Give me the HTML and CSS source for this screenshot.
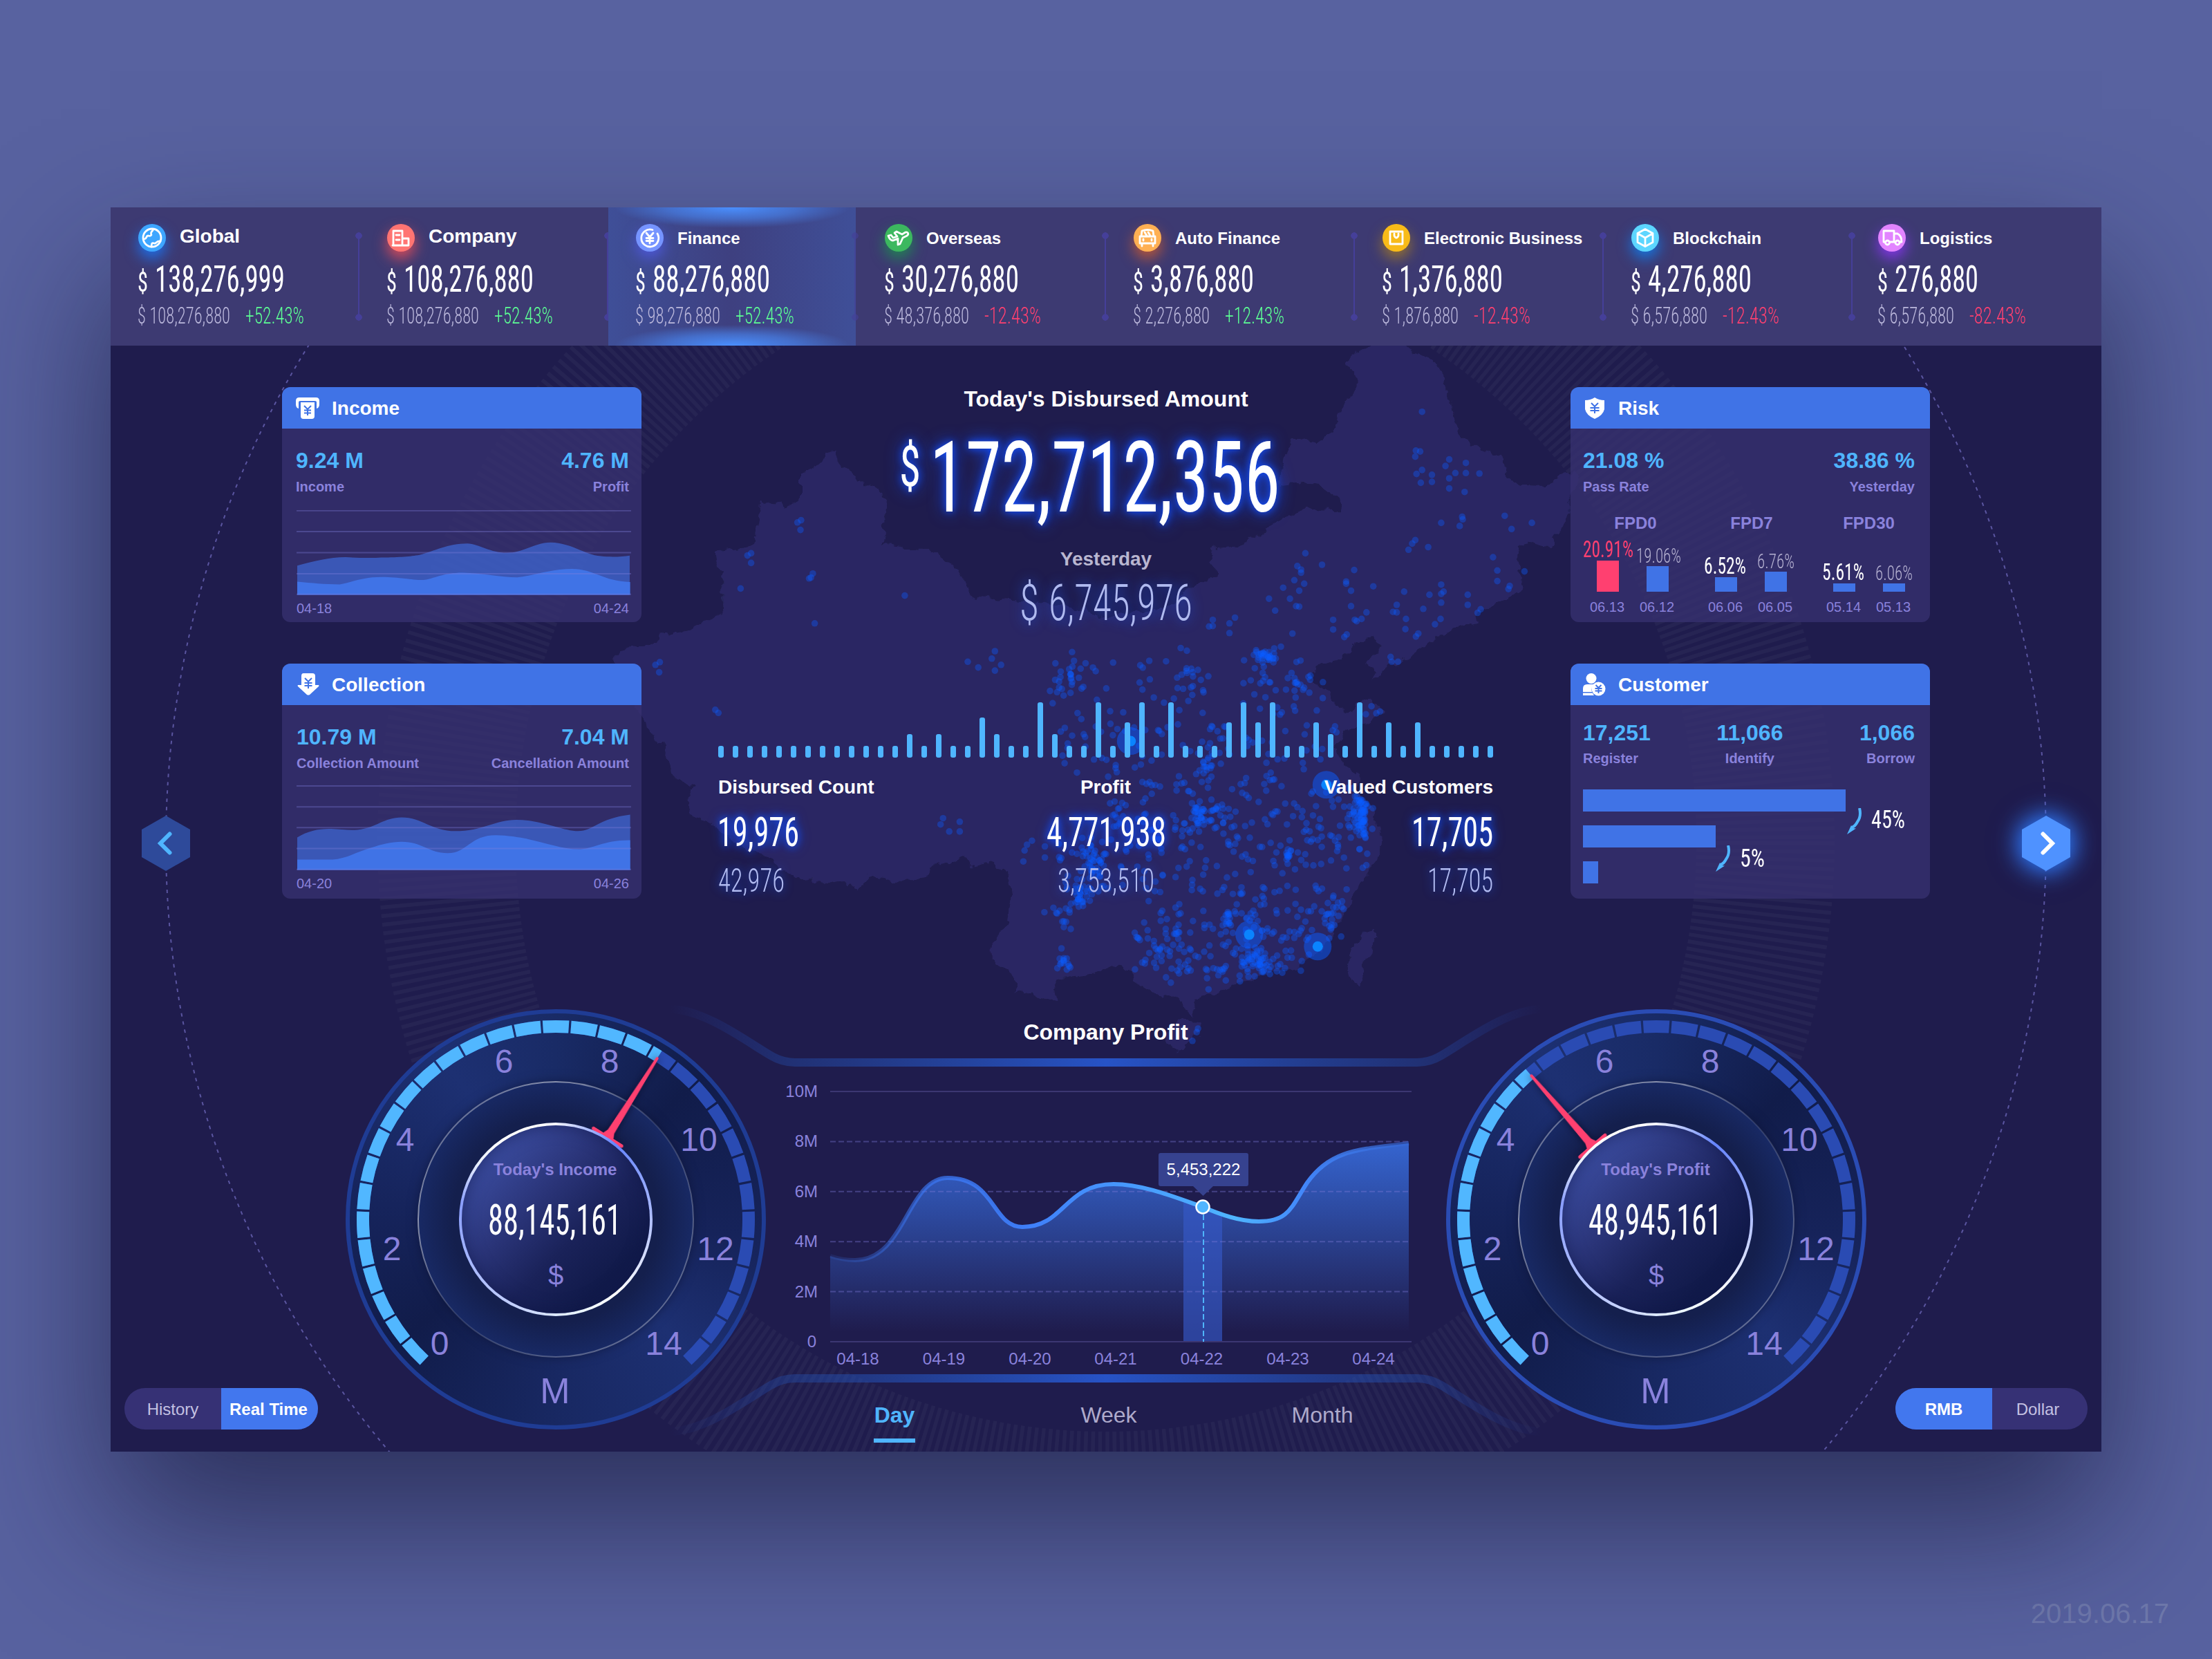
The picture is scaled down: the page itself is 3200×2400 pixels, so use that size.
FILE: index.html
```
<!DOCTYPE html>
<html lang="en">
<head>
    <meta charset="UTF-8">
    <title>Finance Dashboard</title>
    <link rel="stylesheet" href="styles.css">
</head>
<body>
<div class="dashboard">

    <!-- background: dashed orbit, striped ring, map -->
    <svg class="backdrop" viewBox="160 300 2880 1800">
        <defs>
            <linearGradient id="rail" gradientUnits="userSpaceOnUse" x1="970" x2="2230" y1="0" y2="0">
                <stop offset="0" stop-color="#2450c0" stop-opacity="0"/>
                <stop offset=".14" stop-color="#2450b0" stop-opacity=".4"/>
                <stop offset=".5" stop-color="#2753c6"/>
                <stop offset=".86" stop-color="#2450b0" stop-opacity=".4"/>
                <stop offset="1" stop-color="#2450c0" stop-opacity="0"/>
            </linearGradient>
            <filter id="coast" x="-2%" y="-2%" width="104%" height="104%">
                <feTurbulence type="fractalNoise" baseFrequency=".06" numOctaves="3" seed="4"/>
                <feDisplacementMap in="SourceGraphic" scale="16" xChannelSelector="R" yChannelSelector="G"/>
            </filter>
        </defs>
        <circle cx="1600" cy="1220" r="1360" fill="none" stroke="#5a55a0" stroke-width="2" stroke-dasharray="5 7"/>
        <circle cx="1600" cy="1217" r="954" fill="none" stroke="#fff" stroke-opacity=".035" stroke-width="200" stroke-dasharray="5.7 5.7"/>
        <g fill="#2b2863" filter="url(#coast)">
            <g transform="translate(900 500) scale(.8929 .6378)">
                <path d="M330 242L347 243 348 268 375 290 382 308 405 320 430 350 428 380 420 400 425 450 460 457 495 460 525 490 540 500 555 540 570 570 640 578 720 590 790 615 860 600 900 580 915 550 950 530 965 515 950 490 960 460 1000 455 1030 430 1060 400 1110 370 1167 372 1165 350 1130 315 1090 310 1063 315 1075 250 1085 210 1125 220 1155 190 1160 150 1190 90 1190 60 1175 45 1180 20 1215 0 1230-20 1260-15 1275 5 1310 30 1335 70 1345 150 1360 210 1390 235 1420 245 1430 290 1455 318 1500 320 1530 290 1545 283 1549 310 1535 345 1535 380 1520 410 1505 455 1470 445 1450 455 1455 510 1460 550 1440 570 1405 590 1385 610 1385 630 1340 645 1290 690 1250 725 1215 755 1220 735 1205 720 1230 680 1215 660 1200 665 1165 710 1130 725 1110 750 1120 770 1150 780 1155 815 1180 835 1200 800 1230 815 1240 825 1215 850 1180 870 1155 910 1170 950 1195 970 1190 1010 1215 1045 1220 1080 1235 1110 1225 1150 1210 1200 1185 1240 1170 1290 1155 1330 1125 1380 1095 1410 1040 1430 990 1450 950 1475 930 1480 922 1520 910 1490 895 1475 860 1470 830 1440 820 1415 795 1405 770 1425 740 1430 700 1440 705 1485 680 1480 665 1465 640 1470 635 1430 600 1390 600 1350 625 1310 630 1260 625 1195 600 1170 570 1185 555 1160 530 1175 510 1170 485 1210 440 1212 400 1205 380 1240 370 1220 310 1215 270 1200 235 1155 200 1145 150 1090 110 1060 105 1030 115 1000 80 975 70 915 50 885 35 850 10 800-5 770 0 735-15 710 0 685 50 680 60 655 95 650 140 620 165 600 165 530 150 470 160 465 200 460 215 445 225 350 265 365 290 350 290 290 320 270Z"/>
                <path d="M1215 1325L1222 1335 1215 1380 1200 1410 1195 1455 1175 1420 1180 1380 1195 1340Z"/>
                <path d="M885 1545L905 1530 940 1532 935 1560 915 1590 900 1597 882 1585Z"/>
            </g>
        </g>
        <g id="dots" fill="#0a5cff"></g>
        <g fill="none" stroke="url(#rail)" stroke-width="12">
            <path d="M970 1460C1020 1460 1085 1510 1115 1527Q1132 1537 1150 1537H2050Q2068 1537 2085 1527C2115 1510 2180 1460 2230 1460"/>
            <path d="M970 2071C1020 2071 1085 2021 1115 2004Q1132 1994 1150 1994H2050Q2068 1994 2085 2004C2115 2021 2180 2071 2230 2071"/>
        </g>
    </svg>

    <header class="topbar">
        <div class="cell">
            <div class="cell-title lg">
                <span class="badge global"><svg viewBox="0 0 40 40"><circle cx="20" cy="20" r="13"/><path d="M8.500 22c5-1 2-5 6-5 4 1 5-1 4-3s2-3 3-6M19 33c0-5 1-6 4-5 3 1 3-4 9-3"/></svg></span><span>Global</span>
            </div>
            <div class="amount"><span class="din cur" data-w="15">$</span><span class="din" data-w="188">138,276,999</span></div>
            <div class="compare"><span class="din" data-w="134">$ 108,276,880</span><span class="din up" data-w="85">+52.43%</span></div>
        </div>
        <div class="cell">
            <div class="cell-title lg">
                <span class="badge company"><svg viewBox="0 0 40 40"><path d="M9 31V10h13v21M22 21h9v10H8M13 16h5M13 23h5"/></svg></span><span>Company</span>
            </div>
            <div class="amount"><span class="din cur" data-w="15">$</span><span class="din" data-w="188">108,276,880</span></div>
            <div class="compare"><span class="din" data-w="134">$ 108,276,880</span><span class="din up" data-w="85">+52.43%</span></div>
        </div>
        <div class="cell active">
            <div class="cell-title">
                <span class="badge finance"><svg viewBox="0 0 40 40"><path d="M24 8.500A12.500 12.500 0 1 0 31 14M15 13l5 6 5-6M20 19v9M15 20.500h10M15 24.500h10"/></svg></span><span>Finance</span>
            </div>
            <div class="amount"><span class="din cur" data-w="15">$</span><span class="din" data-w="170">88,276,880</span></div>
            <div class="compare"><span class="din" data-w="123">$ 98,276,880</span><span class="din up" data-w="85">+52.43%</span></div>
        </div>
        <div class="cell">
            <div class="cell-title">
                <span class="badge overseas"><svg viewBox="0 0 40 40"><path d="M5 17l4-1 3 4 6-2-4-5 3-2 8 4 5-3c4-1 5 3 2 5l-6 3-4 9-3 1v-9l-7 3c-4 0-6-4-7-7z"/></svg></span><span>Overseas</span>
            </div>
            <div class="amount"><span class="din cur" data-w="15">$</span><span class="din" data-w="170">30,276,880</span></div>
            <div class="compare"><span class="din" data-w="123">$ 48,376,880</span><span class="din down" data-w="82">-12.43%</span></div>
        </div>
        <div class="cell">
            <div class="cell-title">
                <span class="badge auto"><svg viewBox="0 0 40 40"><path d="M11 18l1-8q8-3 16 0l1 8M9 18h22v10H9zM12 28v4M28 28v4M16 12l3 5M21 12l3 5M14 22v2M26 22v2"/></svg></span><span>Auto Finance</span>
            </div>
            <div class="amount"><span class="din cur" data-w="15">$</span><span class="din" data-w="150">3,876,880</span></div>
            <div class="compare"><span class="din" data-w="111">$ 2,276,880</span><span class="din up" data-w="86">+12.43%</span></div>
        </div>
        <div class="cell">
            <div class="cell-title">
                <span class="badge ebiz"><svg viewBox="0 0 40 40"><path d="M11 11h18v18H11z"/><path d="M17 14v3q3 6 6 0v-3"/></svg></span><span>Electronic Business</span>
            </div>
            <div class="amount"><span class="din cur" data-w="15">$</span><span class="din" data-w="150">1,376,880</span></div>
            <div class="compare"><span class="din" data-w="111">$ 1,876,880</span><span class="din down" data-w="82">-12.43%</span></div>
        </div>
        <div class="cell">
            <div class="cell-title">
                <span class="badge chain"><svg viewBox="0 0 40 40"><path d="M20 7.500l11 6v13l-11 6-11-6v-13zM9.500 14L20 20l10.500-6M20 20v12"/></svg></span><span>Blockchain</span>
            </div>
            <div class="amount"><span class="din cur" data-w="15">$</span><span class="din" data-w="150">4,276,880</span></div>
            <div class="compare"><span class="din" data-w="111">$ 6,576,880</span><span class="din down" data-w="82">-12.43%</span></div>
        </div>
        <div class="cell">
            <div class="cell-title">
                <span class="badge logistics"><svg viewBox="0 0 40 40"><path d="M10 26H8V10h15v16h-6M23 14h5c4 2 6 6 6 12h-3M23 26h2"/><circle cx="13.500" cy="27" r="3"/><circle cx="28" cy="27" r="3"/></svg></span><span>Logistics</span>
            </div>
            <div class="amount"><span class="din cur" data-w="15">$</span><span class="din" data-w="121">276,880</span></div>
            <div class="compare"><span class="din" data-w="111">$ 6,576,880</span><span class="din down" data-w="82">-82.43%</span></div>
        </div>
    </header>

    <section class="overview">
        <svg class="hex prev" viewBox="0 0 70 80"><path class="hex-body" d="M35 0L70 20V60L35 80 0 60V20Z"/><path class="chevron" d="M40.500 26.500L27 40 40.500 53.500"/></svg>

        <div class="column">
            <div class="panel">
                <div class="panel-head">
                    <svg viewBox="0 0 36 34"><path fill="#fff" d="M5 1h24q5 0 5 5v5q0 5-4 6V8q0-2-2-2H6q-2 0-2 2v9q-4-1-4-6V6q0-5 5-5z" /><path fill="#fff" d="M7 8h20v20q0 4-4 4H11q-4 0-4-4z"/><path class="yen" d="M12 13l5 5 5-5M17 18v9M12 19.500h10M12 23.500h10"/></svg>
                    Income
                </div>
                <div class="panel-body">
                    <div class="pair">
                        <div><strong>9.24 M</strong><small>Income</small></div>
                        <div class="right"><strong>4.76 M</strong><small>Profit</small></div>
                    </div>
                    <svg class="area" viewBox="84 388 1403 253" preserveAspectRatio="none">
                        <path class="back" d="M87 553C160 540 220 528 290 528 340 530 400 531 440 529 520 528 560 526 600 521 660 510 720 487 800 487 850 489 900 515 965 515 1040 515 1080 484 1150 484 1240 486 1290 520 1360 525 1400 528 1450 527 1481 523V640H87Z"/>
                        <path class="front" d="M87 601C150 605 200 609 265 609 320 602 360 587 440 587 520 587 560 596 615 596 660 592 700 574 780 574 860 575 940 588 1010 588 1080 583 1150 563 1240 563 1330 563 1370 600 1483 602V640H87Z"/>
                        <path class="grid-line" d="M84 389.500H1487M84 452H1487M84 514.500H1487M84 577H1487M84 638.500H1487"/>
                    </svg>
                    <div class="dates"><span>04-18</span><span>04-24</span></div>
                </div>
            </div>

            <div class="panel collection">
                <div class="panel-head">
                    <svg viewBox="0 0 36 34"><path fill="#fff" d="M11 0h13q4 0 4 4v13h5q1 1 0 2L20 31q-2 1-4 0L3 19q-1-1 0-2h5V4q0-4 3-4z"/><path class="yen" d="M13 7l5 5 5-5M18 12v10M12.500 14h11M12.500 18h11"/></svg>
                    Collection
                </div>
                <div class="panel-body">
                    <div class="pair">
                        <div><strong>10.79 M</strong><small>Collection Amount</small></div>
                        <div class="right"><strong>7.04 M</strong><small>Cancellation Amount</small></div>
                    </div>
                    <svg class="area" viewBox="84 1209 1403 254" preserveAspectRatio="none">
                        <path class="back" d="M87 1365C130 1345 180 1338 230 1339 270 1340 300 1344 340 1342 420 1336 450 1305 525 1305 610 1305 650 1346 750 1346 860 1346 920 1312 1005 1312 1110 1312 1200 1346 1265 1346 1330 1346 1350 1308 1483 1297V1462H87Z"/>
                        <path class="front" d="M87 1431H235C290 1429 340 1407 400 1395 440 1386 480 1378 525 1378 610 1378 640 1412 718 1412 800 1412 810 1358 920 1358 1070 1360 1170 1400 1265 1400 1330 1400 1370 1372 1483 1373V1462H87Z"/>
                        <path class="grid-line" d="M84 1211H1487M84 1273.500H1487M84 1335.500H1487M84 1398H1487M84 1460.500H1487"/>
                    </svg>
                    <div class="dates"><span>04-20</span><span>04-26</span></div>
                </div>
            </div>
        </div>

        <div class="center">
            <h1>Today's Disbursed Amount</h1>
            <div class="total"><span class="din total-cur" data-w="31">$</span><span class="din glow" data-w="507">172,712,356</span></div>
            <h2>Yesterday</h2>
            <div class="yesterday"><span class="din" data-w="28">$</span><span class="din" data-w="208">6,745,976</span></div>
            <div class="ticks" id="ticks"></div>
            <div class="stats">
                <div><h3>Disbursed Count</h3><div class="stat-main"><span class="din" data-w="118">19,976</span></div><div class="stat-sub"><span class="din" data-w="96">42,976</span></div></div>
                <div class="mid"><h3>Profit</h3><div class="stat-main"><span class="din" data-w="173">4,771,938</span></div><div class="stat-sub"><span class="din" data-w="140">3,753,510</span></div></div>
                <div class="right"><h3>Valued Customers</h3><div class="stat-main"><span class="din" data-w="118">17,705</span></div><div class="stat-sub"><span class="din" data-w="95">17,705</span></div></div>
            </div>
        </div>

        <div class="column">
            <div class="panel risk">
                <div class="panel-head">
                    <svg viewBox="0 0 36 34"><path fill="#fff" d="M17 1q6 4 14 4v13q-2 9-14 14Q5 27 3 18V5q8 0 14-4z"/><path class="yen" d="M12 9l5 5 5-5M17 14v10M10.500 16h13M10.500 20h13"/></svg>
                    Risk
                </div>
                <div class="panel-body">
                    <div class="pair">
                        <div><strong>21.08 %</strong><small>Pass Rate</small></div>
                        <div class="right"><strong>38.86 %</strong><small>Yesterday</small></div>
                    </div>
                    <div class="fpd">
                        <div class="fpd-group"><h4>FPD0</h4>
                            <div class="fpd-bars">
                                <div class="hot"><span class="din" data-w="73">20.91%</span><i style="height:45px"></i></div>
                                <div class="old"><span class="din" data-w="65">19.06%</span><i style="height:37px"></i></div>
                            </div>
                            <div class="fpd-dates"><span>06.13</span><span>06.12</span></div>
                        </div>
                        <div class="fpd-group"><h4>FPD7</h4>
                            <div class="fpd-bars">
                                <div><span class="din" data-w="61">6.52%</span><i style="height:21px"></i></div>
                                <div class="old"><span class="din" data-w="54">6.76%</span><i style="height:29px"></i></div>
                            </div>
                            <div class="fpd-dates"><span>06.06</span><span>06.05</span></div>
                        </div>
                        <div class="fpd-group"><h4>FPD30</h4>
                            <div class="fpd-bars">
                                <div><span class="din" data-w="61">5.61%</span><i style="height:12px"></i></div>
                                <div class="old"><span class="din" data-w="54">6.06%</span><i style="height:12px"></i></div>
                            </div>
                            <div class="fpd-dates"><span>05.14</span><span>05.13</span></div>
                        </div>
                    </div>
                </div>
            </div>

            <div class="panel customer">
                <div class="panel-head">
                    <svg viewBox="0 0 36 34"><circle cx="12" cy="7.500" r="7.500" fill="#fff"/><path fill="#fff" d="M0 27V22q0-6 6-6h10q-5 5-3 11zM0 28.500h14q1 2 2 3.500H0z"/><circle cx="22.500" cy="22.500" r="10" fill="#fff"/><path class="yen" d="M18.500 17l4 4 4-4M22.500 21v8M17.500 22h10M17.500 25.500h10"/></svg>
                    Customer
                </div>
                <div class="panel-body">
                    <div class="pair">
                        <div><strong>17,251</strong><small>Register</small></div>
                        <div class="mid"><strong>11,066</strong><small>Identify</small></div>
                        <div class="right"><strong>1,066</strong><small>Borrow</small></div>
                    </div>
                    <div class="funnel">
                        <div class="funnel-row"><i style="width:380px"></i><svg viewBox="0 0 22 38"><path d="M18 0q3 12-3 20-3 6-8 8" fill="none" stroke="#4fb5ff" stroke-width="4"/><path d="M0 38L6 25 9 29 13 29.500Z" fill="#4fb5ff"/></svg><span class="din" data-w="49">45%</span></div>
                        <div class="funnel-row"><i style="width:192px"></i><svg viewBox="0 0 22 38"><path d="M18 0q3 12-3 20-3 6-8 8" fill="none" stroke="#4fb5ff" stroke-width="4"/><path d="M0 38L6 25 9 29 13 29.500Z" fill="#4fb5ff"/></svg><span class="din" data-w="36">5%</span></div>
                        <div class="funnel-row"><i style="width:22px"></i></div>
                    </div>
                </div>
            </div>
        </div>

        <svg class="hex next" viewBox="0 0 70 80"><path class="hex-body" d="M35 0L70 20V60L35 80 0 60V20Z"/><path class="chevron" d="M30.500 26.500L44 40 30.500 53.500"/></svg>
    </section>

    <section class="bottom">
        <div class="toggle"><span>History</span><span class="on">Real Time</span></div>

        <div class="gauge">
            <svg class="dial" viewBox="-304 -304 608 608">
                <defs>
                    <radialGradient id="well"><stop offset=".75" stop-color="#141f4d"/><stop offset="1" stop-color="#182964"/></radialGradient>
                    <linearGradient id="rim" x1="0" y1="0" x2="1" y2="1"><stop offset="0" stop-color="#fff" stop-opacity=".15"/><stop offset=".25" stop-color="#fff" stop-opacity=".5"/><stop offset=".5" stop-color="#fff" stop-opacity=".12"/><stop offset="1" stop-color="#fff" stop-opacity=".4"/></linearGradient>
                </defs>
                <circle class="well" r="199" fill="url(#well)" stroke="url(#rim)" stroke-width="2"/>
                <path class="seg" pathLength="274" d="M-190.300 204A279 279 0 1 1 190.300 204"/>
                <path class="seg on" pathLength="169.200" d="M-190.300 204A279 279 0 0 1 148.700-236.100"/>
                <g class="scale">
                    <text x="-168" y="195.500">0</text><text x="-237" y="58.500">2</text><text x="-218" y="-99.500">4</text><text x="-75" y="-212.500">6</text>
                    <text x="78" y="-212.500">8</text><text x="207" y="-99.500">10</text><text x="231" y="58.500">12</text><text x="156" y="195.500">14</text>
                    <text x="-1" y="266" class="unit">M</text>
                </g>
                <g class="needle" transform="rotate(32.200)"><path d="M-2-276Q0-279 2-276L5.500-150 9-142H-9L-5.500-150Z"/><path class="foot" d="M-24-140.500H24"/></g>
            </svg>
            <div class="core"><div class="core-face">
                <h5>Today's Income</h5>
                <div class="core-value"><span class="din" data-w="193">88,145,161</span></div>
                <em>$</em>
            </div></div>
        </div>

        <div class="profit">
            <h1>Company Profit</h1>
            <svg class="profit-chart" viewBox="0 0 984 420">
                <defs>
                    <linearGradient id="fill" x1="0" y1="0" x2="0" y2="1"><stop offset="0" stop-color="#3668d6" stop-opacity=".95"/><stop offset=".95" stop-color="#3668d6" stop-opacity="0"/></linearGradient>
                    <linearGradient id="line" gradientUnits="userSpaceOnUse" x1="0" x2="838" y1="0" y2="0"><stop offset="0" stop-color="#3b78f5" stop-opacity=".1"/><stop offset=".22" stop-color="#3b78f5" stop-opacity=".8"/><stop offset=".35" stop-color="#3f80fa"/><stop offset=".7" stop-color="#4fb5ff"/><stop offset=".82" stop-color="#4286fa"/><stop offset="1" stop-color="#3668d6" stop-opacity=".6"/></linearGradient>
                </defs>
                <g transform="translate(92 19)">
                    <path d="M1 238C13 242 25 244 37 244 110 244 112 125 171 125 240 125 235 196 279 196 340 196 340 134 411 134 455 134 505 155 540 167 565 178 595 188 621 188 665 188 668 167 691 132 725 84 765 84 838 75V362H1Z" fill="url(#fill)"/>
                    <path d="M512 158L540 167 568 178V362H512Z" fill="#3659c8" opacity=".65"/>
                    <path class="axis" d="M1 0H842M1 362H842"/>
                    <path class="axis dashed" d="M1 72.400H838M1 144.800H838M1 217.200H838M1 289.600H838"/>
                    <path d="M1 238C13 242 25 244 37 244 110 244 112 125 171 125 240 125 235 196 279 196 340 196 340 134 411 134 455 134 505 155 540 167 565 178 595 188 621 188 665 188 668 167 691 132 725 84 765 84 838 75" fill="none" stroke="url(#line)" stroke-width="6"/>
                    <path d="M541 178V362" stroke="#4fb5ff" stroke-width="2" stroke-dasharray="8 4"/>
                    <path d="M479 89h124q3 0 3 3v42q0 3-3 3h-48l-14.500 14-14.500-14h-47q-3 0-3-3v-42q0-3 3-3z" fill="#36428f"/>
                    <text class="tip" x="541" y="121">5,453,222</text>
                    <circle cx="540" cy="167" r="9.500" fill="#4fb5ff" stroke="#fff" stroke-width="2.500"/>
                    <g class="ylab">
                        <text x="-17" y="8">10M</text><text x="-17" y="80">8M</text><text x="-17" y="153">6M</text><text x="-17" y="225">4M</text><text x="-17" y="298">2M</text><text x="-19" y="370">0</text>
                    </g>
                    <g class="xlab">
                        <text x="41" y="395">04-18</text><text x="165.500" y="395">04-19</text><text x="290" y="395">04-20</text><text x="414" y="395">04-21</text><text x="538.500" y="395">04-22</text><text x="663" y="395">04-23</text><text x="787" y="395">04-24</text>
                    </g>
                </g>
            </svg>
            <nav class="tabs"><a class="current">Day</a><a>Week</a><a>Month</a></nav>
        </div>

        <div class="gauge bright">
            <svg class="dial" viewBox="-304 -304 608 608">
                <circle class="well" r="199" fill="url(#well)" stroke="url(#rim)" stroke-width="2"/>
                <path class="seg" pathLength="274" d="M-190.300 204A279 279 0 1 1 190.300 204"/>
                <path class="seg on" pathLength="96" d="M-190.300 204A279 279 0 0 1-183-210.600"/>
                <g class="scale">
                    <text x="-168" y="195.500">0</text><text x="-237" y="58.500">2</text><text x="-218" y="-99.500">4</text><text x="-75" y="-212.500">6</text>
                    <text x="78" y="-212.500">8</text><text x="207" y="-99.500">10</text><text x="231" y="58.500">12</text><text x="156" y="195.500">14</text>
                    <text x="-1" y="266" class="unit">M</text>
                </g>
                <g class="needle" transform="rotate(-41)"><path d="M-2-276Q0-279 2-276L5.500-150 9-142H-9L-5.500-150Z"/><path class="foot" d="M-24-140.500H24"/></g>
            </svg>
            <div class="core"><div class="core-face">
                <h5>Today's Profit</h5>
                <div class="core-value"><span class="din" data-w="193">48,945,161</span></div>
                <em>$</em>
            </div></div>
        </div>

        <div class="toggle end"><span class="on">RMB</span><span>Dollar</span></div>
    </section>
</div>
<footer>2019.06.17</footer>

<script>
    // squeeze the numerals to their condensed width
    document.querySelectorAll('.din').forEach(function (el) {
        var natural = el.getBoundingClientRect().width;
        var w = parseFloat(el.dataset.w);
        el.style.transform = 'scaleX(' + w / natural + ')';
        el.style.marginRight = (w - natural) + 'px';
    });

    // disbursement ticks
    var heights = {13: 34, 15: 34, 18: 58, 19: 34, 22: 80, 23: 34, 26: 80, 28: 51, 29: 80, 31: 80, 35: 51, 36: 80, 37: 51, 38: 80, 41: 51, 42: 34, 44: 80, 46: 51, 48: 51};
    var ticks = document.getElementById('ticks');
    for (var i = 0; i < 54; i++) {
        var bar = document.createElement('i');
        bar.style.height = (heights[i] || 17) + 'px';
        ticks.appendChild(bar);
    }

    // map dots: sparse ones by hand, dense areas as clusters [x, y, spreadX, spreadY, count]
    var points = [[1296,150],[1286,238],[1293,240],[1285,252],[1296,282],[1287,291],[1312,293],[1340,258],[1334,273],[1367,266],[1367,289],[1350,289],[1389,290],[1340,301],[1312,309],[1294,311],[1340,324],[1365,332],[1361,388],[1362,394],[1357,409],[1327,402],[1430,386],[1441,416],[1474,402],[1285,441],[1280,449],[1274,463],[1306,457],[1411,480],[1418,510],[1462,512],[1418,534],[1438,545],[1436,552],[290,396],[284,401],[289,418],[209,471],[203,476],[209,493],[309,517],[303,528],[306,526],[192,551],[458,567],[312,630],[61,718],[54,724],[60,741],[151,826],[156,833],[604,693],[599,710],[560,717],[577,730],[604,737],[614,724],[729,695],[520,1072],[547,1080],[516,1086],[530,1102],[547,1102],[905,686],[915,692],[957,622],[951,637],[957,636],[993,617],[984,630],[984,652],[664,1123],[656,1132],[652,1145],[650,1170],[685,1136],[685,1161],[1107,471],[1134,497],[1186,509],[1094,500],[1100,508],[1100,515],[1089,532],[1071,549],[1105,540],[1097,556],[1082,574],[1048,574],[1058,601],[1092,591],[1097,592],[1173,535],[1173,540],[1181,556],[1217,546],[1181,591],[1152,622],[1187,622],[1190,625],[1198,620],[1206,605],[1174,655],[1170,661],[1152,644],[1086,653],[1267,558],[1255,588],[1255,605],[1249,604],[1270,620],[1269,643],[1327,542],[1331,558],[1327,563],[1327,583],[1308,565],[1298,597],[1370,565],[1370,588],[1391,598],[1386,606],[1326,620],[1317,632],[1290,653],[1286,660],[1245,706],[1247,717],[1257,717],[1214,818],[1228,830],[1222,834],[1205,836],[933,1549],[924,1577],[931,1557],[889,1445],[950,1460],[1001,1442],[978,1440],[966,1428]];
    var clusters = [[1040,708,14,22,36],[720,755,24,22,20],[912,750,16,16,12],[1100,765,10,14,12],[945,1065,26,26,44],[1197,1070,10,30,72],[765,1170,16,28,38],[745,1250,10,18,26],[1075,1160,6,10,12],[1025,1395,14,20,44],[880,1360,24,22,24],[982,1300,5,10,12],[720,1400,10,16,14],[715,1290,15,20,14],[945,950,12,20,14],[805,1065,8,20,14],[1150,1300,10,30,16]];
    var areas = [[695,715,270,170,48],[1000,690,140,150,28],[710,860,450,120,70],[830,980,370,160,120],[700,1110,530,130,115],[840,1230,330,100,80],[830,1320,290,100,85],[870,1405,200,30,14]];
    var seed = 11;
    function rnd() { seed = (seed * 16807) % 2147483647; return seed / 2147483647; }
    clusters.forEach(function (c) {
        for (var k = 0; k < c[4]; k++) {
            points.push([c[0] + (rnd() + rnd() + rnd() - 1.5) * 1.6 * c[2], c[1] + (rnd() + rnd() + rnd() - 1.5) * 1.6 * c[3]]);
        }
    });
    areas.forEach(function (a) {
        for (var k = 0; k < a[4]; k++) {
            var x = a[0] + rnd() * a[2], y = a[1] + rnd() * a[3];
            // stay inside the coast line
            if (y > 1150 && x > 1225 - (y - 1150) * .42) continue;
            points.push([x, y]);
        }
    });
    var svg = points.map(function (p) {
        return '<circle cx="' + (900 + p[0] * .8929).toFixed(1) + '" cy="' + (500 + p[1] * .6378).toFixed(1) + '" r="4.800" opacity=".38"/>';
    }).join('');
    [[824, 897], [1141, 996], [1016, 1336], [1127, 1363]].forEach(function (p) {
        var x = 900 + p[0] * .8929, y = 500 + p[1] * .6378;
        svg += '<circle cx="' + x + '" cy="' + y + '" r="20" opacity=".5"/><circle cx="' + x + '" cy="' + y + '" r="7.500" fill="#0a84ff"/>';
    });
    document.getElementById('dots').innerHTML = svg;
</script>
</body>
</html>
```
FILE: styles.css
```
* {
    box-sizing: border-box;
}
body {
    margin: 0;
    padding: 300px 160px 0;
    height: 2400px;
    overflow: hidden;
    background: #5862a0;
    font-family: "Liberation Sans", Arial, sans-serif;
    color: #fff;
}
h1, h2, h3, h4, h5 {
    margin: 0;
    font-weight: bold;
}
.dashboard {
    position: relative;
    width: 2880px;
    height: 1800px;
    background: #1f1c4d;
    box-shadow: 0 100px 200px rgba(20, 22, 55, 0.65);
}
.backdrop {
    position: absolute;
    left: 0;
    top: 0;
    width: 2880px;
    height: 1800px;
    overflow: hidden;
}
.din {
    display: inline-block;
    font-family: Roboto, sans-serif;
    font-stretch: 75%;
    white-space: pre;
    transform-origin: left center;
}

/* top bar */
.topbar {
    position: relative;
    display: grid;
    grid-template-columns: repeat(8, 360px);
    height: 200px;
    background: #3d3a72;
}
.cell {
    position: relative;
    padding: 24px 0 0 40px;
}
.cell:last-child {
    padding-left: 37px;
}
/* divider with a dot at each end */
.cell:not(:last-child)::after {
    content: "";
    position: absolute;
    right: -4px;
    top: 36px;
    width: 10px;
    height: 128px;
    background:
        radial-gradient(circle at 5px 5px, #453f99 4.5px, transparent 5px),
        radial-gradient(circle at 5px 123px, #453f99 4.5px, transparent 5px),
        linear-gradient(#453f99, #453f99) center / 2px 118px no-repeat;
}
.cell.active {
    margin-right: 2px;
    background:
        radial-gradient(ellipse 170px 30px at 50% 0, #4a8fff, rgba(74, 143, 255, 0.55) 55%, transparent),
        radial-gradient(ellipse 170px 30px at 50% 100%, #4a8fff, rgba(74, 143, 255, 0.55) 55%, transparent),
        linear-gradient(90deg, #3f4f98, #3e4080 50%, #3f4f98);
}
.cell.active::after {
    opacity: 0.6;
}
.cell-title {
    display: flex;
    align-items: center;
    gap: 20px;
    height: 40px;
    font-size: 24px;
    font-weight: bold;
    line-height: 30px;
    white-space: nowrap;
}
.cell-title span:last-child {
    padding-top: 1px;
}
.cell-title.lg {
    font-size: 28px;
}
.cell-title.lg span:last-child {
    padding: 0 0 5px;
}
.badge {
    width: 40px;
    height: 40px;
    border-radius: 50%;
}
.badge svg {
    display: block;
    fill: none;
    stroke: #fff;
    stroke-width: 2.8;
    stroke-linejoin: round;
    stroke-linecap: round;
}
.global { background: #3ea6ff; box-shadow: 0 10px 20px #1f6fe8; }
.company { background: #ff7472; box-shadow: 0 10px 20px rgba(232, 78, 88, 0.9); }
.finance { background: #7694ff; box-shadow: 0 10px 20px #4d58d8; }
.overseas { background: #3cb85f; box-shadow: 0 10px 20px rgba(30, 140, 80, 0.9); }
.auto { background: #ffb053; box-shadow: 0 10px 20px rgba(200, 90, 50, 0.9); }
.ebiz { background: #f8bb18; box-shadow: 0 10px 20px rgba(160, 120, 40, 0.9); }
.chain { background: #5cd6ff; box-shadow: 0 10px 20px #1676e0; }
.logistics { background: #e284ff; box-shadow: 0 10px 20px #8436e8; }
.amount {
    display: flex;
    align-items: baseline;
    gap: 10px;
    height: 60px;
    margin: 10px 0 0 -1px;
    font-size: 53px;
    line-height: 60px;
}
.cur {
    font-size: 40px;
}
.compare {
    display: flex;
    gap: 22px;
    height: 40px;
    margin: 3px 0 0 -1px;
    font-size: 33px;
    font-weight: 300;
    line-height: 40px;
    color: #bbb8dc;
}
.compare .up { color: #5cff94; }
.compare .down { color: #ff4070; }

/* middle row */
.overview {
    position: relative;
    display: grid;
    grid-template-columns: 248px 520px 1344px 520px 248px;
    height: 960px;
}
.hex {
    width: 70px;
    height: 80px;
    margin: 680px 0 0 45px;
    overflow: visible;
}
.hex.next {
    margin-left: 133px;
    filter: drop-shadow(0 0 18px #2f7bff) drop-shadow(0 0 12px rgba(47, 123, 255, 0.5));
}
.hex-body { fill: #2e4a9a; }
.next .hex-body { fill: #4f92ff; }
.chevron {
    fill: none;
    stroke: #4fb5ff;
    stroke-width: 6;
    stroke-linecap: round;
}
.next .chevron { stroke: #fff; }
.column {
    display: flex;
    flex-direction: column;
    gap: 60px;
    padding-top: 60px;
}
.panel {
    height: 340px;
    border-radius: 12px;
    overflow: hidden;
    background: rgba(55, 49, 112, 0.78);
}
.panel-head {
    display: flex;
    align-items: center;
    gap: 16px;
    height: 60px;
    padding: 1px 0 0 20px;
    background: #4073e6;
    font-size: 28px;
    font-weight: bold;
}
.panel-head svg {
    width: 36px;
    height: 34px;
}
.risk .panel-head,
.customer .panel-head {
    padding: 2px 0 0 18px;
    gap: 15px;
}
.yen {
    fill: none;
    stroke: #4073e6;
    stroke-width: 2;
}
.panel-body {
    padding: 28px 16px 0 20px;
}
.pair {
    display: flex;
    justify-content: space-between;
    padding-right: 2px;
}
.pair strong {
    display: block;
    font-size: 32px;
    line-height: 36px;
    color: #4fb5ff;
}
.pair small {
    display: block;
    margin-top: 8px;
    font-size: 20px;
    font-weight: bold;
    line-height: 24px;
    color: #8a82dc;
}
.right { text-align: right; }
.mid { text-align: center; }
.area {
    display: block;
    width: 484px;
    height: 123px;
    margin: 22px 0 0 1px;
}
.collection .area {
    margin-top: 20px;
}
.collection .pair {
    padding-left: 1px;
}
.area .back { fill: rgba(64, 115, 230, 0.62); }
.area .front { fill: #4073e6; }
.area .grid-line {
    fill: none;
    stroke: rgba(130, 125, 220, 0.35);
    stroke-width: 2;
    vector-effect: non-scaling-stroke;
}
.dates {
    display: flex;
    justify-content: space-between;
    margin-top: 7px;
    padding: 0 2px 0 1px;
    font-size: 20px;
    line-height: 24px;
    color: #8a82dc;
}

/* risk */
.risk .panel-body,
.customer .panel-body {
    padding-left: 18px;
    padding-right: 20px;
}
.fpd {
    display: flex;
    gap: 27px;
    margin-top: 27px;
}
.fpd-group {
    width: 144px;
    text-align: center;
}
.fpd h4 {
    padding-left: 2px;
    font-size: 24px;
    line-height: 28px;
    color: #8a82dc;
}
.fpd-group:first-child h4 {
    padding-left: 8px;
}
.fpd-group:last-child h4 {
    padding: 0 1px 0 0;
}
.fpd-bars,
.fpd-dates {
    display: grid;
    grid-template-columns: 72px 72px;
}
.fpd-bars {
    height: 85px;
    align-items: end;
}
.fpd-bars > div {
    display: flex;
    flex-direction: column;
    align-items: center;
    font-size: 33px;
    line-height: 36px;
}
.fpd-bars span {
    align-self: flex-start;
    height: 34px;
}
.fpd-bars > div:not(.hot) span {
    margin-left: 4px;
}
.fpd-bars .old {
    font-size: 29.5px;
    font-weight: 300;
    line-height: 30px;
    color: #b4b0d0;
}
.fpd-bars .old span {
    height: 30px;
}
.fpd-bars > .old:not(.hot) span {
    margin-left: 9px;
}
.fpd-group:first-child .old:not(.hot) span {
    margin-left: 5px;
}
.fpd-bars i {
    width: 32px;
    background: #4073e6;
}
.fpd-bars .hot { color: #ff4070; }
.fpd-bars .hot i { background: #ff4070; }
.fpd-dates {
    margin-top: 10px;
    font-size: 20px;
    line-height: 24px;
    color: #8a82dc;
}
.fpd-dates span {
    margin-left: -2px;
}

/* customer */
.customer .panel-body {
    padding-top: 22px;
}
.customer .pair small {
    margin-top: 7px;
}
.customer .pair .mid {
    margin-right: 15px;
}
.funnel {
    display: flex;
    flex-direction: column;
    gap: 20px;
    margin-top: 33px;
}
.funnel-row {
    display: flex;
    height: 32px;
    font-size: 36px;
    line-height: 40px;
}
.funnel-row i {
    background: #4073e6;
}
.funnel-row svg {
    flex: none;
    width: 22px;
    height: 38px;
    margin: 27px 13px 0 2px;
}
.funnel-row span {
    height: 40px;
    margin-top: 24px;
}
.funnel-row:nth-child(2) svg {
    margin-left: 0;
    margin-top: 29px;
}
.funnel-row:nth-child(2) span {
    margin-top: 28px;
}

/* centre figures */
.center {
    width: 1120px;
    margin: 0 auto;
    padding-top: 57px;
    text-align: center;
}
h1 {
    font-size: 32px;
    line-height: 40px;
}
.total {
    display: flex;
    justify-content: center;
    gap: 13px;
    height: 160px;
    margin-top: 14px;
    padding-right: 48px;
    font-size: 143px;
    line-height: 160px;
    text-shadow: 0 0 12px #1450ff, 0 0 28px #1450ff;
}
.total-cur {
    font-size: 82px;
    line-height: 128px;
}
h2 {
    margin-top: 20px;
    font-size: 28px;
    line-height: 36px;
    color: #b9b6d0;
}
.yesterday {
    display: flex;
    justify-content: center;
    gap: 14px;
    margin-top: 5px;
    font-size: 73px;
    font-weight: 300;
    line-height: 80px;
    color: #b0baf0;
    text-shadow: 0 0 20px #1f4fd8;
}
.ticks {
    display: flex;
    justify-content: space-between;
    align-items: flex-end;
    height: 80px;
    margin: 104px 0 0 -1px;
}
.ticks i {
    width: 8px;
    border-radius: 3px;
    background: #4fb5ff;
}
.stats {
    display: grid;
    grid-template-columns: 1fr 1fr 1fr;
    margin: 25px 0 0 -1px;
    text-align: left;
}
.stats .mid { text-align: center; }
.stats .right { text-align: right; }
h3 {
    font-size: 28px;
    line-height: 36px;
}
.stat-main {
    height: 64px;
    margin: 15px 0 0 -1px;
    font-size: 60px;
    line-height: 64px;
    text-shadow: 0 0 12px #1450ff, 0 0 20px #1450ff;
}
.stat-sub {
    height: 50px;
    margin: 13px 0 0;
    font-size: 48px;
    font-weight: 300;
    line-height: 50px;
    color: #b0baf0;
    text-shadow: 0 0 16px #1f4fd8;
}
.mid .stat-main,
.mid .stat-sub {
    margin-left: 2px;
}

/* bottom row */
.bottom {
    position: relative;
    display: grid;
    grid-template-columns: 340px 608px 984px 608px 340px;
    height: 640px;
}
.toggle {
    display: flex;
    align-self: end;
    width: 280px;
    height: 60px;
    margin: 0 0 32px 20px;
    border-radius: 30px;
    overflow: hidden;
    background: #363175;
    font-size: 24px;
    line-height: 61px;
    text-align: center;
    color: #c4c1e2;
}
.toggle.end {
    width: 278px;
    margin-left: 42px;
}
.toggle span {
    width: 140px;
}
.toggle .on {
    background: #4277ee;
    color: #fff;
    font-weight: bold;
}
.toggle:not(.end) .on {
    padding-right: 3px;
}
.toggle.end span:last-child {
    width: 138px;
    padding-right: 6px;
}
.gauge {
    position: relative;
    display: flex;
    align-items: center;
    justify-content: center;
    width: 608px;
    height: 608px;
    border: 6px solid #1f3c94;
    border-radius: 50%;
    background: conic-gradient(#192b66, #111c4a 45deg, #16235a 95deg, #1d3072 135deg, #182862 180deg, #111c4a 232deg, #16245c 275deg, #1d3072 325deg, #192b66);
}
.gauge.bright {
    border-color: #2a4cb4;
}
.dial {
    position: absolute;
    left: -6px;
    top: -6px;
    width: 608px;
    height: 608px;
}
.well {
    filter: drop-shadow(0 0 8px rgba(10, 16, 50, 0.6));
}
.seg {
    fill: none;
    stroke: #2a4bb3;
    stroke-width: 18;
    stroke-dasharray: 7.66 0.664;
}
.seg.on {
    stroke: #51b7ff;
}
.scale {
    fill: #8a82dc;
    font-size: 48px;
    text-anchor: middle;
}
.unit {
    font-size: 52px;
}
.needle {
    fill: #ff4070;
    filter: drop-shadow(0 0 6px rgba(8, 10, 40, 0.8));
}
.foot {
    fill: none;
    stroke: #ff4070;
    stroke-width: 5;
    stroke-linecap: round;
}
.core {
    position: relative;
    width: 280px;
    height: 280px;
    padding: 4px;
    border-radius: 50%;
    background: conic-gradient(#f4f6ff, #6584ff 38deg, #a9b9ff 85deg, #fff 140deg, #eaf6ff 165deg, #c3d0ff 205deg, #8a9eff 280deg, #e8efff 305deg, #fff 325deg, #fff 350deg, #f4f6ff);
}
.core-face {
    height: 272px;
    padding-top: 50px;
    border-radius: 50%;
    text-align: center;
    background: linear-gradient(135deg, #3d4fa4 12%, #2a3478 40%, #1a2259 60%, #111a4a 80%);
    box-shadow: inset 0 0 24px rgba(15, 22, 70, 0.6);
}
.core h5 {
    margin-left: -2px;
    font-size: 24px;
    line-height: 28px;
    color: #8a82dc;
}
.core-value {
    height: 64px;
    margin: 27px 0 0 -4px;
    font-size: 61px;
    line-height: 65px;
}
.core em {
    display: block;
    margin-top: 26px;
    font-size: 40px;
    font-style: normal;
    line-height: 44px;
    color: #8a82dc;
}
.profit {
    padding-top: 13px;
    text-align: center;
}
.profit h1 {
    margin-left: -1px;
}
.profit-chart {
    display: block;
    width: 984px;
    height: 420px;
    margin-top: 47px;
    font-size: 24px;
}
.axis {
    fill: none;
    stroke: #3b3672;
    stroke-width: 2;
}
.dashed {
    stroke: rgba(125, 120, 215, 0.4);
    stroke-dasharray: 8 4;
}
.tip {
    fill: #fff;
    text-anchor: middle;
}
.ylab {
    fill: #8a82dc;
    text-anchor: end;
}
.xlab {
    fill: #8a82dc;
    text-anchor: middle;
}
.tabs {
    display: grid;
    grid-template-columns: 310px 310px 308px;
    justify-items: center;
    margin-top: 47px;
    padding-left: 31px;
    font-size: 32px;
    line-height: 40px;
    color: #aeaacb;
}
.tabs .current {
    width: 60px;
    padding-bottom: 14px;
    border-bottom: 6px solid #4fb5ff;
    font-weight: bold;
    color: #4fb5ff;
}

footer {
    margin: 210px -98px 0 0;
    text-align: right;
    font-size: 40px;
    line-height: 48px;
    color: #6f79ac;
}
```
